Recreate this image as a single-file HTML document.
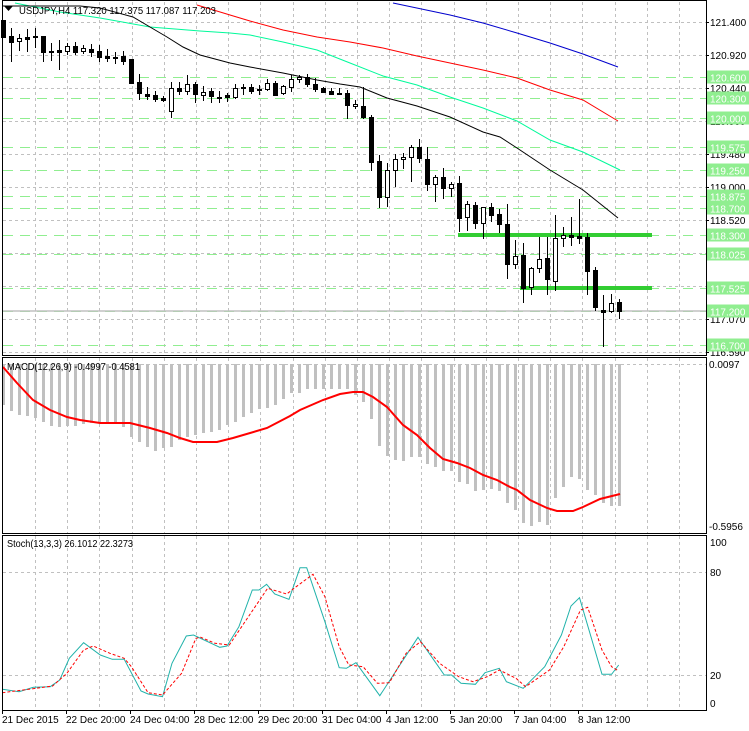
<!DOCTYPE html>
<html><head><meta charset="utf-8"><style>
html,body{margin:0;padding:0;background:#fff;}
svg{display:block;font-family:"Liberation Sans",sans-serif;}
text{font-size:10px;fill:#000;}
text.wl{fill:#fff;}
</style></head><body>
<svg id="s" width="749" height="731" viewBox="0 0 749 731" xmlns="http://www.w3.org/2000/svg">
<g id="grid"></g>
<g id="lv"></g>
<g id="ma"></g>
<g id="cd"></g>
<g id="mc"></g>
<g id="st"></g>
<g fill="none" stroke="#000" stroke-width="1">
<rect x="2.5" y="0.5" width="704" height="355"/>
<rect x="2.5" y="357.5" width="704" height="176"/>
<rect x="2.5" y="535.5" width="704" height="175"/>
</g>
<path d="M4 6 L13 6 L8.5 11 Z" fill="#000"/>
<text x="19" y="14" font-size="11" textLength="197" lengthAdjust="spacingAndGlyphs">USDJPY,H4  117.320 117.375 117.087 117.203</text>
<text x="7" y="370" textLength="133" lengthAdjust="spacingAndGlyphs">MACD(12,26,9) -0.4997 -0.4581</text>
<text x="7" y="547" textLength="126" lengthAdjust="spacingAndGlyphs">Stoch(13,3,3) 26.1012 22.3273</text>
<g id="ax"></g>
<text x="710" y="26">121.400</text>
<text x="710" y="59">120.920</text>
<text x="710" y="92">120.440</text>
<text x="710" y="125">119.960</text>
<text x="710" y="158">119.480</text>
<text x="710" y="191">119.000</text>
<text x="710" y="224">118.520</text>
<text x="710" y="323">117.070</text>
<text x="710" y="356">116.590</text>
<g id="lb"></g>
<text x="709" y="368">0.0097</text>
<text x="709" y="530">-0.5956</text>
<text x="710" y="546">100</text>
<text x="710" y="576">80</text>
<text x="710" y="679">20</text>
<text x="710" y="707">0</text>
<text x="2" y="723">21 Dec 2015</text>
<text x="66" y="723">22 Dec 20:00</text>
<text x="130" y="723">24 Dec 04:00</text>
<text x="194" y="723">28 Dec 12:00</text>
<text x="258" y="723">29 Dec 20:00</text>
<text x="322" y="723">31 Dec 04:00</text>
<text x="386" y="723">4 Jan 12:00</text>
<text x="450" y="723">5 Jan 20:00</text>
<text x="514" y="723">7 Jan 04:00</text>
<text x="578" y="723">8 Jan 12:00</text>
</svg>
<script>
var NS="http://www.w3.org/2000/svg";
function el(p,t,a){var e=document.createElementNS(NS,t);for(var k in a)e.setAttribute(k,a[k]);document.getElementById(p).appendChild(e);return e;}
for(var k=0;k<21;k++){var x=35.5+Math.round(32.2*k);if(x>705)break;
 el("grid","line",{x1:x,y1:2,x2:x,y2:355,stroke:"#c0c0c0","stroke-dasharray":"3,3"});
 el("grid","line",{x1:x,y1:358,x2:x,y2:533,stroke:"#c0c0c0","stroke-dasharray":"3,3"});
 el("grid","line",{x1:x,y1:536,x2:x,y2:710,stroke:"#c0c0c0","stroke-dasharray":"3,3"});}
for(var k=0;k<=10;k++){var y=22.5+33*k;el("grid","line",{x1:3,y1:y,x2:706,y2:y,stroke:"#c0c0c0","stroke-dasharray":"3,3"});
 el("ax","line",{x1:706,y1:y,x2:709,y2:y,stroke:"#000"});}
[364.5,572.5,675.5].forEach(function(y){el("grid","line",{x1:3,y1:y,x2:706,y2:y,stroke:"#c0c0c0","stroke-dasharray":"3,3"});});
var lv=[120.6,120.3,120.0,119.575,119.25,118.875,118.7,118.3,118.025,117.525,117.2,116.7];
lv.forEach(function(p){var y=Math.round(22+(121.4-p)*68.75)+0.5;
 el("lv","line",{x1:3,y1:y,x2:706,y2:y,stroke:"#90ee90","stroke-dasharray":"10,7"});
 el("lb","rect",{x:707,y:y-7,width:42,height:13,fill:"#90ee90"});
 var t=el("lb","text",{x:710,y:y+4,"class":"wl"});t.textContent=p.toFixed(3);});
el("lv","line",{x1:3,y1:311,x2:706,y2:311,stroke:"#c0c0c0","stroke-width":1.5});
el("lv","line",{x1:458,y1:235,x2:652,y2:235,stroke:"#32cd32","stroke-width":4});
el("lv","line",{x1:520,y1:288,x2:652,y2:288,stroke:"#32cd32","stroke-width":4});
function pl(p,pts,c,w,d){el(p,"polyline",{points:pts,fill:"none",stroke:c,"stroke-width":w||1,"stroke-dasharray":d||"none"});}
pl("ma","393,3 450,15 483,23 517,33 550,43 583,54 618,67","#0000cd");
pl("ma","197,5 230,15 250,21 283,30 317,37 350,42 383,48 417,56 450,63 483,70 517,78 550,90 583,100 618,121","#ff0000");
pl("ma","15,3 60,12 100,18 150,27 200,31 230,33 250,35 283,42 317,50 350,63 383,76 417,85 450,97 483,108 517,121 550,140 583,152 620,170","#00fa9a");
pl("ma","3,6 80,6 100,8 133,17 150,27 167,37 183,47 200,55 230,63 250,67 283,73 317,80 340,84 360,87 387,98 417,106 450,117 483,132 500,137 517,148 550,170 583,190 618,218","#000");
var C=[[20,37,20,37,1],[28,62,36,42,1],[34,51,38,41,0],[29,52,37,39,1],[28,48,36,37,1],[36,62,36,52,1],[43,61,51,52,1],[40,70,50,52,1],[43,55,46,51,0],[42,55,46,52,1],[45,54,48,51,0],[44,57,49,52,1],[45,62,51,57,1],[49,62,56,58,1],[52,64,57,58,1],[51,65,56,61,1],[59,84,59,83,1],[74,100,82,93,1],[87,100,94,96,1],[91,102,95,99,1],[96,102,98,100,1],[82,118,88,111,0],[82,95,88,91,1],[75,95,84,91,0],[82,103,84,94,1],[86,101,92,95,0],[88,103,91,96,1],[91,103,97,98,1],[93,102,95,97,1],[84,99,88,97,0],[84,95,87,88,1],[84,94,87,91,1],[85,95,89,90,0],[79,91,83,89,0],[81,95,83,95,1],[85,95,86,93,0],[75,92,79,87,0],[75,83,77,79,0],[74,87,77,84,1],[78,92,84,89,1],[87,93,88,92,1],[88,95,91,94,1],[88,95,93,94,1],[90,119,93,105,1],[100,109,104,106,0],[87,119,106,117,1],[115,171,117,162,1],[155,208,161,197,1],[163,207,170,197,0],[154,187,159,170,0],[153,169,157,159,0],[145,182,147,157,0],[139,163,147,158,1],[147,191,159,184,1],[175,202,177,184,0],[168,199,177,188,1],[182,197,184,188,0],[176,232,183,218,1],[201,231,204,217,0],[202,229,205,223,1],[207,239,207,223,0],[203,222,207,215,1],[209,233,214,224,1],[204,279,224,264,1],[240,269,256,264,0],[243,303,255,288,1],[267,295,268,287,0],[237,273,259,268,0],[237,295,258,279,1],[215,291,238,281,0],[227,247,235,238,0],[217,246,235,237,1],[199,244,236,238,1],[233,295,237,271,1],[267,311,270,307,1],[295,347,310,312,1],[294,313,303,311,0],[299,319,302,311,1]];
C.forEach(function(c,i){var x=3+8*i+0.5;
 el("cd","line",{x1:x,y1:c[0],x2:x,y2:c[1],stroke:"#000"});
 var h=Math.max(c[3]-c[2],1);
 if(c[4])el("cd","rect",{x:x-2.5,y:c[2],width:5,height:h+1,fill:"#000"});
 else el("cd","rect",{x:x-2,y:c[2]+0.5,width:4,height:h,fill:"#fff",stroke:"#000"});});
var M=[405,411,415,416,418,422,426,427,426,426,424,423,423,423,422,427,437,442,447,451,448,447,440,437,435,433,432,430,425,422,417,413,409,408,405,399,393,393,389,389,389,389,389,389,395,402,419,446,456,460,461,457,457,464,467,471,471,482,484,491,490,489,491,503,510,523,526,522,525,498,487,477,479,490,495,503,506,506];
M.forEach(function(b,i){var x=3+8*i;el("mc","rect",{x:x-1,y:364,width:3,height:b-364,fill:"#c0c0c0"});});
pl("mc","3,367 17,383 33,400 50,410 67,417 80,420 100,423 130,423 150,428 167,433 180,438 193,442 217,442 233,438 267,428 290,416 300,410 323,400 340,394 353,392 363,392 373,397 387,407 403,425 417,435 430,448 443,459 457,463 470,468 483,475 497,480 510,487 517,490 530,500 547,508 557,511 573,511 583,507 600,499 620,494","#ff0000",2);
pl("st","2.4,689.3 19.1,691.7 33.4,687.3 50.2,686.7 59.7,680 69.3,658.3 83.6,642.7 100.3,655 112.3,659.3 124.2,659.3 141,691 148.1,694 162.5,696.7 172,663.3 186.3,636 193.5,635 219.8,647.3 227,646 238.9,626.7 252.3,590 259,590 266.6,584.3 274.7,594 289,599.3 300,567.7 306.7,567.7 324.9,621.7 339.2,667.7 346.4,668.3 356,662.7 379.8,695.7 396.6,670 418,637.3 444.3,675 451.5,675 461,683.3 475.4,684.3 485,672.7 499.3,668.3 506.4,681.7 523.2,688.3 544.7,666.7 561.4,635 571,606 579.5,597.7 602,674.3 611.6,674.3 618.7,665","#20b2aa");
pl("st","2.4,692.7 28.7,689.3 52.6,686 66.9,673.3 83.6,650 93.2,646 109.9,653.3 124.2,658.3 131.4,666.7 148.1,692.7 162.5,695 181.6,673.3 195.9,638.3 200.7,637.3 215,643.3 229.3,645 248.4,616.7 267.6,588.3 286.7,594 296.2,586.7 313,574.3 324.9,596.7 339.2,646.7 348.8,665 363.1,666.7 377.4,683.3 389.4,682.7 406.1,653.3 420.4,641.7 439.6,663.3 458.7,676.7 473,681.7 487.3,676.7 499.3,670 516,678.3 525.6,686.7 549.5,670 563.8,646.7 580.5,610 587.7,607.3 602,650 611.6,666.7 618.7,671","#ff0000",1,"3,2");
[2,66,130,194,258,322,386,450,514,578].forEach(function(x){el("ax","line",{x1:x+0.5,y1:711,x2:x+0.5,y2:714,stroke:"#000"});});
</script>
</body></html>
